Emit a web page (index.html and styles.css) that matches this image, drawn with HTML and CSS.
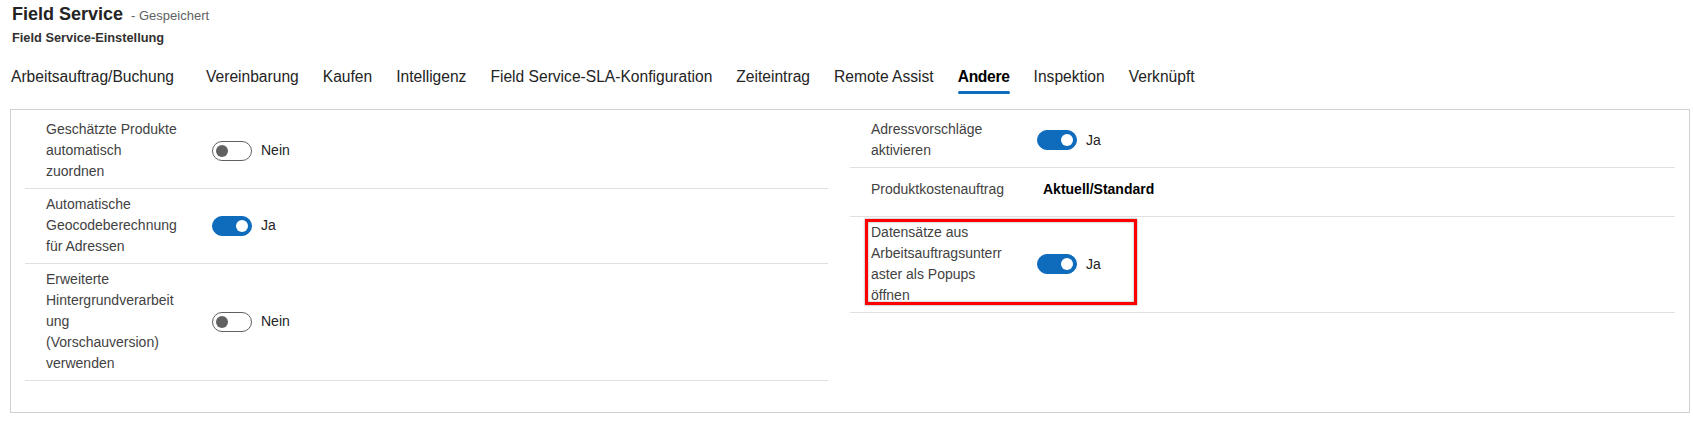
FILE: index.html
```html
<!DOCTYPE html>
<html lang="de">
<head>
<meta charset="utf-8">
<title>Field Service</title>
<link rel="stylesheet" href="styles.css">
</head>
<body>
<div class="page">
  <header class="header">
    <div class="title-line"><span class="title">Field Service</span><span class="saved">- Gespeichert</span></div>
    <div class="subtitle">Field Service-Einstellung</div>
  </header>
  <nav class="tabs">
    <span class="tab">Arbeitsauftrag/Buchung</span>
    <span class="tab">Vereinbarung</span>
    <span class="tab">Kaufen</span>
    <span class="tab">Intelligenz</span>
    <span class="tab">Field Service-SLA-Konfiguration</span>
    <span class="tab">Zeiteintrag</span>
    <span class="tab">Remote Assist</span>
    <span class="tab active">Andere</span>
    <span class="tab">Inspektion</span>
    <span class="tab">Verknüpft</span>
  </nav>
  <section class="panel">
    <div class="col col-left">
      <div class="row">
        <div class="label">Geschätzte Produkte automatisch zuordnen</div>
        <div class="value"><span class="toggle off"><span class="knob"></span></span><span class="state">Nein</span></div>
      </div>
      <div class="row">
        <div class="label">Automatische Geocodeberechnung für Adressen</div>
        <div class="value"><span class="toggle on"><span class="knob"></span></span><span class="state">Ja</span></div>
      </div>
      <div class="row">
        <div class="label">Erweiterte Hintergrundverarbeitung (Vorschauversion) verwenden</div>
        <div class="value"><span class="toggle off"><span class="knob"></span></span><span class="state">Nein</span></div>
      </div>
    </div>
    <div class="col col-right">
      <div class="row">
        <div class="label">Adressvorschläge aktivieren</div>
        <div class="value"><span class="toggle on"><span class="knob"></span></span><span class="state">Ja</span></div>
      </div>
      <div class="row row-single">
        <div class="label">Produktkostenauftrag</div>
        <div class="value text-value">Aktuell/Standard</div>
      </div>
      <div class="row row-marked">
        <div class="label">Datensätze aus Arbeitsauftragsunterraster als Popups öffnen</div>
        <div class="value"><span class="toggle on"><span class="knob"></span></span><span class="state">Ja</span></div>
        <div class="highlight"></div>
      </div>
    </div>
  </section>
</div>
</body>
</html>
```

FILE: styles.css
```css
* { box-sizing: border-box; }

html, body {
  margin: 0;
  padding: 0;
  background: #ffffff;
}

body {
  font-family: "Liberation Sans", Arial, sans-serif;
  color: #242424;
}

.page {
  width: 1693px;
  height: 424px;
  padding: 0 3px 0 10px;
  overflow: hidden;
}

.header {
  padding-left: 2px;
}

.title-line {
  padding-top: 2px;
  height: 26px;
  line-height: 24px;
  white-space: nowrap;
}

.title {
  font-size: 18px;
  font-weight: 700;
  color: #242424;
}

.saved {
  font-size: 13px;
  color: #616161;
  margin-left: 8px;
}

.subtitle {
  margin-top: 3px;
  font-size: 12.8px;
  line-height: 18px;
  font-weight: 700;
  color: #323130;
}

.tabs {
  display: flex;
  gap: 24px;
  margin-top: 20px;
  padding-left: 1px;
  white-space: nowrap;
}

.tab {
  font-size: 15.6px;
  line-height: 20px;
  padding-bottom: 7px;
  color: #242424;
  position: relative;
}

.tab:first-child {
  margin-right: 8px;
}

.tab.active {
  font-weight: 700;
  letter-spacing: -0.3px;
  color: #000;
}

.tab.active::after {
  content: "";
  position: absolute;
  left: 0;
  right: 0;
  bottom: 0;
  height: 3px;
  border-radius: 2px;
  background: #0f6cbd;
}

.panel {
  margin-top: 15px;
  width: 1680px;
  height: 304px;
  border: 1px solid #d1d1d1;
  padding: 4px 14px 0 14px;
  display: grid;
  grid-template-columns: 1fr 1fr;
  align-items: start;
}

.col-left {
  margin-right: 22px;
}

.row {
  display: flex;
  align-items: center;
  padding: 5px 0 6px 21px;
  border-bottom: 1px solid #e0e0e0;
  position: relative;
}

.label {
  width: 134px;
  margin-right: 32px;
  font-size: 14px;
  line-height: 21px;
  color: #424242;
  overflow-wrap: anywhere;
}

.value {
  display: flex;
  align-items: center;
  font-size: 14px;
  line-height: 21px;
}

.state {
  margin-left: 9px;
  color: #242424;
}

.toggle {
  position: relative;
  display: inline-block;
  width: 40px;
  height: 20px;
  border-radius: 10px;
  border: 1px solid #616161;
  background: #fff;
}

.toggle .knob {
  position: absolute;
  top: 3px;
  left: 3px;
  width: 12px;
  height: 12px;
  border-radius: 50%;
  background: #616161;
}

.toggle.on {
  background: #0f6cbd;
  border-color: #0f6cbd;
}

.toggle.on .knob {
  left: auto;
  right: 3px;
  background: #fff;
}

.row-single {
  align-items: flex-start;
  padding-top: 11px;
  padding-bottom: 16px;
}

.text-value {
  padding-left: 6px;
  font-weight: 700;
  color: #000;
}

.highlight {
  position: absolute;
  left: 15px;
  top: 2px;
  width: 272px;
  height: 86px;
  border: 3px solid #ff0000;
  box-shadow: 0 0 2px rgba(0, 0, 0, 0.45), inset 0 0 2px rgba(0, 0, 0, 0.45);
  pointer-events: none;
}
```
